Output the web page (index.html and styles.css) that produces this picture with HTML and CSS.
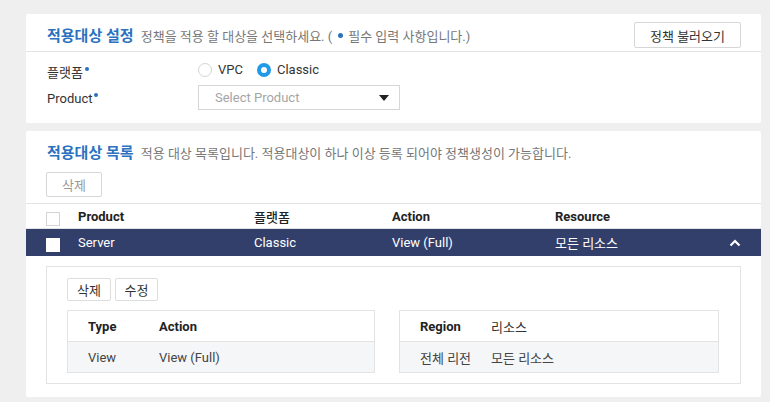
FILE: index.html
```html
<!DOCTYPE html>
<html lang="ko">
<head>
<meta charset="utf-8">
<link rel="stylesheet" href="styles.css">
</head>
<body>
<div class="page">
  <section class="card">
    <div class="card-head">
      <div class="head-text">
        <span class="title">적용대상 설정</span>
        <span class="desc">정책을 적용 할 대상을 선택하세요. (<span class="dot"></span>필수 입력 사항입니다.)</span>
      </div>
      <button class="btn btn-load">정책 불러오기</button>
    </div>
    <div class="form">
      <div class="form-row row-radio">
        <div class="label">플랫폼<span class="req"></span></div>
        <div class="radios">
          <label class="radio"><span class="radio-circle"></span>VPC</label>
          <label class="radio"><span class="radio-circle checked"></span>Classic</label>
        </div>
      </div>
      <div class="form-row row-select">
        <div class="label">Product<span class="req"></span></div>
        <div class="select">
          <span>Select Product</span>
          <svg class="caret" width="10" height="6" viewBox="0 0 10 6"><path d="M0 0h10L5 6z" fill="#222"/></svg>
        </div>
      </div>
    </div>
  </section>

  <section class="card card2">
    <div class="list-head">
      <span class="title">적용대상 목록</span>
      <span class="desc">적용 대상 목록입니다. 적용대상이 하나 이상 등록 되어야 정책생성이 가능합니다.</span>
    </div>
    <div class="list-tools">
      <button class="btn btn-del" disabled>삭제</button>
    </div>
    <div class="grid grid-head">
      <span class="check"></span>
      <span>Product</span>
      <span class="ko">플랫폼</span>
      <span>Action</span>
      <span>Resource</span>
      <span></span>
    </div>
    <div class="grid grid-sel">
      <span class="check"></span>
      <span>Server</span>
      <span>Classic</span>
      <span>View (Full)</span>
      <span class="ko">모든 리소스</span>
      <svg class="chev" width="12" height="8" viewBox="0 0 12 8"><path d="M1.5 6.5L6 2l4.5 4.5" fill="none" stroke="#fff" stroke-width="2.2"/></svg>
    </div>
    <div class="detail">
      <div class="detail-tools">
        <button class="btn btn-sm">삭제</button>
        <button class="btn btn-sm">수정</button>
      </div>
      <div class="subtables">
        <div class="sub sub-left">
          <div class="sub-row sub-head"><span class="c-type">Type</span><span>Action</span></div>
          <div class="sub-row sub-body"><span class="c-type">View</span><span>View (Full)</span></div>
        </div>
        <div class="sub sub-right">
          <div class="sub-row sub-head"><span class="c-region">Region</span><span class="ko">리소스</span></div>
          <div class="sub-row sub-body"><span class="c-region">전체 리전</span><span>모든 리소스</span></div>
        </div>
      </div>
    </div>
  </section>
</div>
</body>
</html>
```

FILE: styles.css
```css
* { box-sizing: border-box; }
html, body { margin: 0; padding: 0; }
body {
  background: #efefef;
  font-family: Roboto, "Noto Sans CJK KR", sans-serif;
  font-size: 13px;
  color: #333;
  width: 770px;
  height: 402px;
  overflow: hidden;
}
.page {
  padding: 14px 9px 0 26px;
  display: flex;
  flex-direction: column;
  gap: 8px;
}
.card {
  background: #fff;
  border-radius: 2px;
}
.card-head {
  height: 38px;
  border-bottom: 1px solid #e3e3e3;
  display: flex;
  align-items: flex-start;
  justify-content: space-between;
  padding: 8px 20px 0 21px;
}
.head-text {
  line-height: 26px;
  padding-top: 1px;
}
.title {
  color: #2a72c0;
  font-size: 15px;
  font-weight: 700;
  margin-right: 4px;
}
.desc {
  color: #777;
  font-size: 13px;
}
.dot {
  display: inline-block;
  width: 5px;
  height: 5px;
  border-radius: 50%;
  background: #2a72c0;
  vertical-align: 3px;
  margin: 0 5px 0 6px;
}
.btn {
  font-family: Roboto, "Noto Sans CJK KR", sans-serif;
  background: #fff;
  border: 1px solid #d6d6d6;
  border-radius: 2px;
  color: #333;
  font-size: 13px;
  padding: 0;
}
.btn-load {
  width: 107px;
  height: 26px;
}
.form {
  padding: 3px 0 12px 21px;
}
.form-row {
  display: flex;
  align-items: center;
}
.row-radio { height: 29px; }
.row-select { height: 27px; }
.label {
  width: 151px;
  color: #333;
}
.row-radio .label { margin-top: 4px; }
.row-select .label { margin-top: 2px; }
.req {
  display: inline-block;
  width: 4px;
  height: 4px;
  border-radius: 50%;
  background: #2a72c0;
  margin-left: 2px;
  vertical-align: 6px;
}
.radios {
  display: flex;
  gap: 14px;
}
.radio {
  display: flex;
  align-items: center;
  gap: 6px;
  color: #333;
}
.radio-circle {
  width: 14px;
  height: 14px;
  border-radius: 50%;
  border: 1px solid #d4d4d4;
  background: #fff;
}
.radio-circle.checked {
  border: 4px solid #1e9ae6;
}
.select {
  width: 202px;
  height: 25px;
  border: 1px solid #d6d6d6;
  display: flex;
  align-items: center;
  justify-content: space-between;
  padding: 0 10px 0 16px;
  color: #a5a5a5;
}
.card2 { height: 266px; }
.list-head {
  padding: 10px 21px 0;
  height: 41px;
  line-height: 24px;
}
.list-tools {
  padding: 0 20px;
  height: 31px;
}
.btn-del {
  width: 56px;
  height: 25px;
  color: #999;
}
.grid {
  display: grid;
  grid-template-columns: 32px 176px 138px 163px 174px 1fr;
  align-items: center;
  padding-left: 20px;
}
.grid-head {
  height: 26px;
  border-top: 1px solid #e3e3e3;
  border-bottom: 1px solid #e3e3e3;
  font-weight: 700;
  color: #222;
}
.grid-head .ko { font-weight: 500; }
.check {
  width: 14px;
  height: 14px;
  border: 1px solid #d4d4d4;
  background: #fff;
  margin-top: 6px;
}
.grid-sel {
  height: 27px;
  background: #333f6b;
  color: #fff;
}
.grid-sel .check { border-color: #fff; margin-top: 4px; }
.chev { justify-self: start; }
.detail {
  margin: 10px 20px 0;
  border: 1px solid #e3e3e3;
  height: 118px;
  padding: 11px 20px 0;
}
.detail-tools {
  display: flex;
  gap: 4px;
}
.btn-sm {
  width: 44px;
  height: 23px;
  font-size: 13px;
  border-color: #ddd;
}
.btn-sm + .btn-sm { width: 43px; }
.subtables {
  display: flex;
  gap: 24px;
  margin-top: 9px;
}
.sub {
  border: 1px solid #e3e3e3;
}
.sub-left { width: 308px; }
.sub-right { width: 320px; }
.sub-row {
  display: flex;
  align-items: center;
  padding-left: 20px;
  height: 31px;
}
.sub-head {
  font-weight: 700;
  color: #222;
  border-bottom: 1px solid #e3e3e3;
}
.sub-head .ko { font-weight: 400; color: #333; }
.sub-body {
  background: #f5f6f7;
  color: #444;
  height: 30px;
}
.c-type { width: 71px; }
.c-region { width: 71px; }
```
